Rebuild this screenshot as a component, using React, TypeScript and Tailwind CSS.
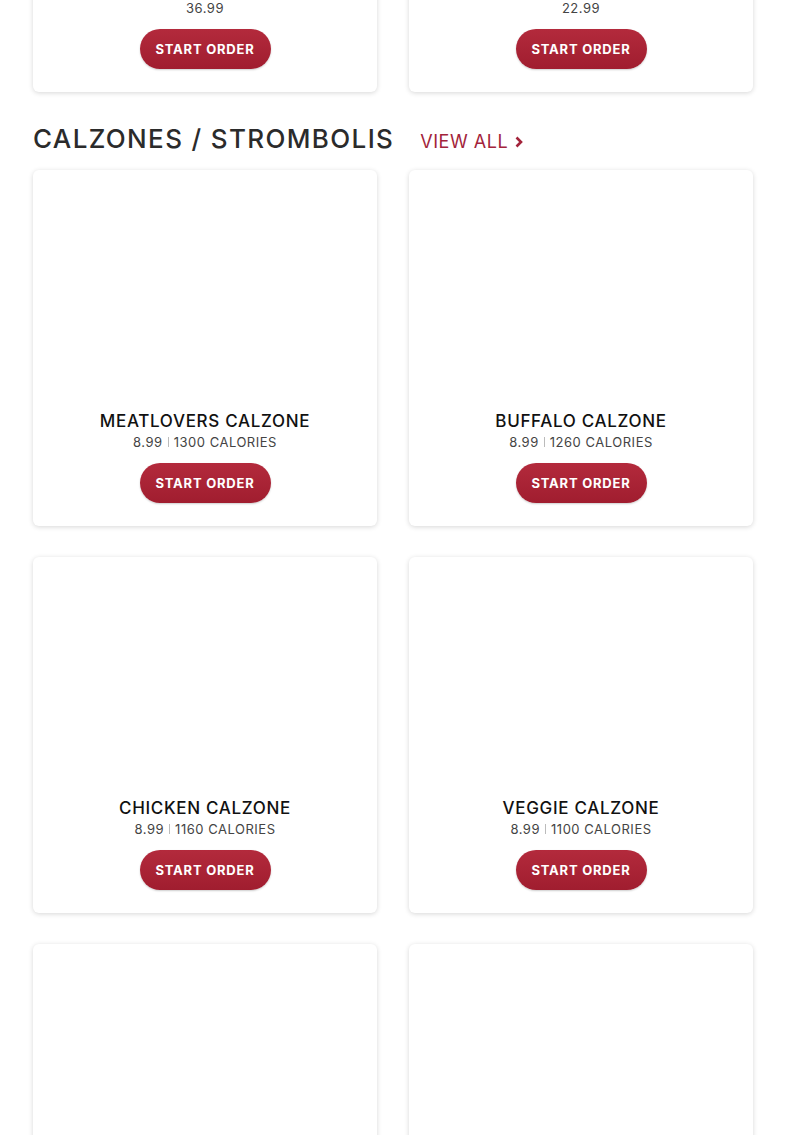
import React from "react";

type Item = { name: string; price: string; cal?: string };

const Card = ({ item, className = "" }: { item: Item; className?: string }) => (
  <div className={`bg-white rounded-[6px] shadow-[0_1px_5px_rgba(0,0,0,0.16)] flex flex-col items-center pb-[23px] ${className}`}>
    <div className="h-[239px] w-full" />
    <div className="text-[17px] leading-[24px] h-[24px] tracking-[0.04em] text-[#111] font-medium">{item.name}</div>
    <div className="text-[13px] leading-[18px] h-[18px] tracking-[0.04em] text-[#444] flex items-center">
      {item.price}
      {item.cal && (
        <>
          <span className="inline-block w-px h-[10px] bg-[#bbb] mx-[5px]" />
          {item.cal}
        </>
      )}
    </div>
    <button className="mt-[12px] h-[40px] w-[131px] rounded-full bg-gradient-to-b from-[#b32a3c] to-[#a01d2f] text-white text-[13px] leading-none font-bold tracking-[0.06em] shadow-[0_1px_2px_rgba(0,0,0,0.2)]">
      START ORDER
    </button>
  </div>
);

export default function App() {
  const top: Item[] = [
    { name: "LARGE PIZZA", price: "36.99" },
    { name: "MEDIUM PIZZA", price: "22.99" },
  ];
  const items: Item[] = [
    { name: "MEATLOVERS CALZONE", price: "8.99", cal: "1300 CALORIES" },
    { name: "BUFFALO CALZONE", price: "8.99", cal: "1260 CALORIES" },
    { name: "CHICKEN CALZONE", price: "8.99", cal: "1160 CALORIES" },
    { name: "VEGGIE CALZONE", price: "8.99", cal: "1100 CALORIES" },
    { name: "ITALIAN STROMBOLI", price: "8.99", cal: "1200 CALORIES" },
    { name: "PEPPERONI STROMBOLI", price: "8.99", cal: "1250 CALORIES" },
  ];
  return (
    <div className="bg-white h-[1135px] overflow-hidden" style={{ fontFamily: "Inter, 'Noto Sans', sans-serif" }}>
      <div className="w-[720px] ml-[33px] mt-[-264px]">
        <div className="grid grid-cols-2 gap-x-[32px]">
          {top.map((t) => (
            <Card key={t.name} item={t} />
          ))}
        </div>
        <div className="flex items-baseline h-[78px] pt-[34px]">
          <h2 className="text-[26px] font-medium tracking-[0.052em] text-[#2b2b2b] leading-none">CALZONES / STROMBOLIS</h2>
          <a className="ml-[26px] flex items-baseline text-[18px] tracking-[0.03em] text-[#a3243b] leading-none">
            VIEW ALL
            <svg width="10" height="12" viewBox="0 0 10 12" className="ml-[6px] self-center">
              <path d="M2.5 1.5 L7 6 L2.5 10.5" stroke="#a3243b" strokeWidth="2.6" fill="none" />
            </svg>
          </a>
        </div>
        <div className="grid grid-cols-2 gap-x-[32px] gap-y-[31px]">
          {items.map((t) => (
            <Card key={t.name} item={t} />
          ))}
        </div>
      </div>
    </div>
  );
}
